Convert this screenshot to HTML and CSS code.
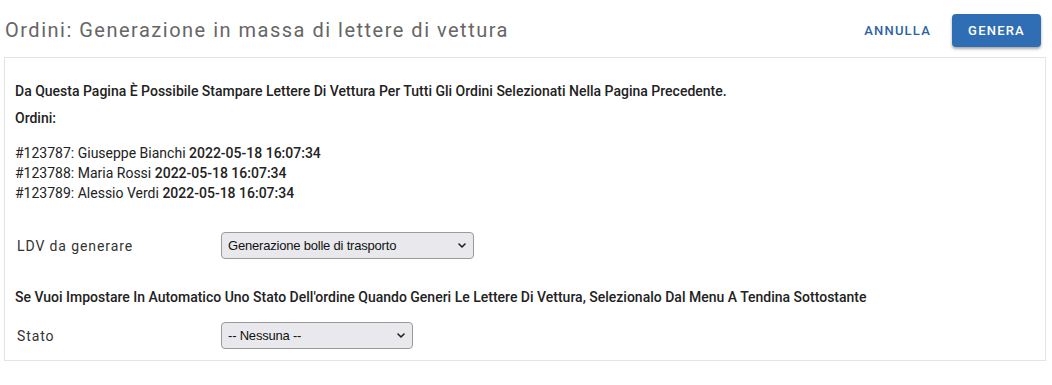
FILE: index.html
```html
<!DOCTYPE html>
<html lang="it">
<head>
<meta charset="utf-8">
<title>Ordini: Generazione in massa di lettere di vettura</title>
<link rel="stylesheet" href="styles.css">
</head>
<body>
<header class="header">
  <h1 class="title">Ordini: Generazione in massa di lettere di vettura</h1>
  <div class="actions">
    <button class="btn btn-text" type="button">ANNULLA</button>
    <button class="btn btn-primary" type="button">GENERA</button>
  </div>
</header>
<main class="card">
  <p class="intro">Da Questa Pagina È Possibile Stampare Lettere Di Vettura Per Tutti Gli Ordini Selezionati Nella Pagina Precedente.</p>
  <p class="orders-title">Ordini:</p>
  <ul class="orders">
    <li><span class="order-name">#123787: Giuseppe Bianchi</span> <span class="order-date">2022-05-18 16:07:34</span></li>
    <li><span class="order-name">#123788: Maria Rossi</span> <span class="order-date">2022-05-18 16:07:34</span></li>
    <li><span class="order-name">#123789: Alessio Verdi</span> <span class="order-date">2022-05-18 16:07:34</span></li>
  </ul>
  <div class="form-row form-row-ldv">
    <label class="label" for="ldv">LDV da generare</label>
    <div class="select-wrap select-wide">
      <select id="ldv" class="select">
        <option>Generazione bolle di trasporto</option>
      </select>
      <svg class="chevron" viewBox="0 0 8 5" width="8" height="5" aria-hidden="true"><path d="M1 1l3 3 3-3" fill="none" stroke="#222" stroke-width="1.6" stroke-linecap="round" stroke-linejoin="round"/></svg>
    </div>
  </div>
  <p class="hint">Se Vuoi Impostare In Automatico Uno Stato Dell'ordine Quando Generi Le Lettere Di Vettura, Selezionalo Dal Menu A Tendina Sottostante</p>
  <div class="form-row form-row-stato">
    <label class="label" for="stato">Stato</label>
    <div class="select-wrap select-narrow">
      <select id="stato" class="select">
        <option>-- Nessuna --</option>
      </select>
      <svg class="chevron" viewBox="0 0 8 5" width="8" height="5" aria-hidden="true"><path d="M1 1l3 3 3-3" fill="none" stroke="#222" stroke-width="1.6" stroke-linecap="round" stroke-linejoin="round"/></svg>
    </div>
  </div>
</main>
</body>
</html>
```

FILE: styles.css
```css
* { box-sizing: border-box; }

body {
  margin: 0;
  font-family: Roboto, "Liberation Sans", Arial, sans-serif;
  color: #222;
  background: #fff;
}

.header {
  display: flex;
  justify-content: space-between;
  align-items: center;
  height: 57px;
  padding: 3px 11px 0 5px;
}

.title {
  margin: 0;
  font-size: 20px;
  font-weight: 400;
  letter-spacing: 1.5px;
  color: #666;
}

.actions {
  display: flex;
  align-items: center;
  gap: 5px;
}

.btn {
  font-family: Roboto, "Liberation Sans", Arial, sans-serif;
  font-size: 13px;
  font-weight: 500;
  letter-spacing: 1.2px;
  border: 0;
  height: 33px;
  cursor: pointer;
}

.btn-text {
  background: transparent;
  color: #2c63a6;
  padding: 0 16px;
}

.btn-primary {
  width: 89px;
  background: #2f6db5;
  color: #fff;
  border-radius: 4px;
  box-shadow: 0 2px 3px rgba(0, 0, 0, 0.35);
}

.card {
  margin: 0 6px 0 4px;
  border: 1px solid #e4e4e4;
  padding: 23px 10px 11px 10px;
  font-size: 14px;
  font-weight: 500;
  line-height: 20px;
}

.card p { margin: 0; }

.intro { margin-bottom: 7px !important; }

.orders-title { margin-bottom: 15px !important; }

.orders {
  list-style: none;
  margin: 0;
  padding: 0;
}

.order-name { font-weight: 400; }
.order-date { font-weight: 500; }

.form-row {
  display: flex;
  align-items: center;
}

.form-row-ldv { margin-top: 29px; }
.form-row-stato { margin-top: 15px; }

.hint { margin-top: 28px !important; }

.label {
  width: 206px;
  padding-left: 2px;
  font-size: 14px;
  font-weight: 400;
  letter-spacing: 0.9px;
  color: #333;
}

.select-wrap {
  position: relative;
}

.select-wide { width: 253px; }
.select-narrow { width: 192px; }

.select {
  -webkit-appearance: none;
  appearance: none;
  width: 100%;
  height: 27px;
  padding: 0 24px 0 6px;
  border: 1px solid #9a9a9a;
  border-radius: 4px;
  background: #e9e9ed;
  font-family: "Liberation Sans", Arial, sans-serif;
  font-size: 13px;
  letter-spacing: -0.2px;
  color: #111;
}

.chevron {
  position: absolute;
  right: 8px;
  top: 11px;
  pointer-events: none;
}
```
